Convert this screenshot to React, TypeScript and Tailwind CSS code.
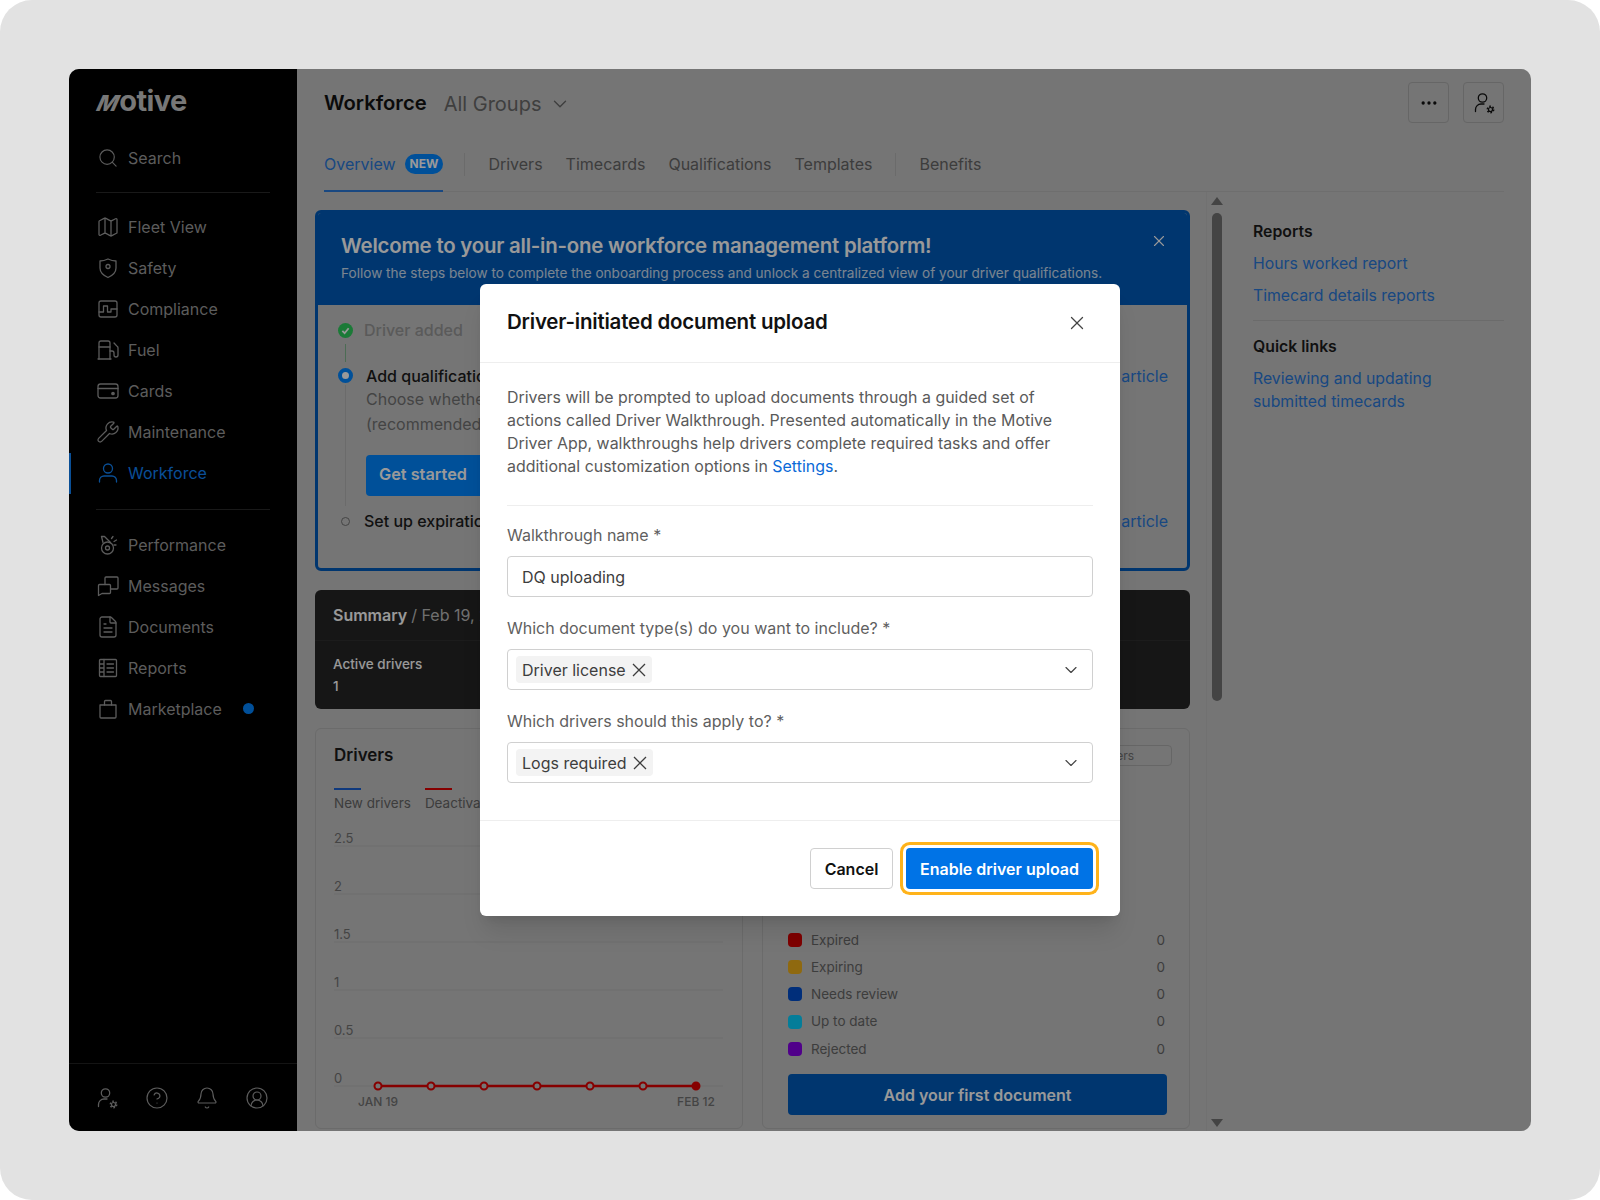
import type { ReactNode } from "react";
import {
  BellIcon,
  ChevronDown,
  CircleHelp,
  CircleUserRound,
  Ellipsis,
  FileText,
  Fuel,
  Map as MapIcon,
  Search,
  Wrench,
  X,
} from "lucide-react";

function Glyph({ children, size = 24 }: { children: ReactNode; size?: number }) {
  return (
    <svg width={size} height={size} viewBox="0 0 24 24" fill="none" stroke="currentColor" strokeWidth="1.3" strokeLinecap="round" strokeLinejoin="round">
      {children}
    </svg>
  );
}

function UserGear({ size = 24 }: { size?: number }) {
  return (
    <Glyph size={size}>
      <circle cx="10.500" cy="7" r="4.200" />
      <path d="M3.500 20.500v-2A5.500 5.500 0 0 1 9 13h3" />
      <circle cx="18.500" cy="18.500" r="2" strokeWidth="1.200" />
      <circle cx="18.500" cy="18.500" r="3.200" strokeWidth="1.500" strokeDasharray="1.700 1.650" strokeLinecap="butt" />
    </Glyph>
  );
}

const topNav: { label: string; icon: ReactNode; active?: boolean }[] = [
  { label: "Fleet View", icon: <MapIcon size={24} strokeWidth={1.3} /> },
  {
    label: "Safety",
    icon: (
      <Glyph>
        <path d="M4 5c3 0 5.500-.8 8-2 2.500 1.200 5 2 8 2v7c0 4.500-3.500 7.500-8 9.500C7.500 19.500 4 16.500 4 12z" />
        <circle cx="12" cy="10.500" r="2" />
      </Glyph>
    ),
  },
  {
    label: "Compliance",
    icon: (
      <Glyph>
        <rect x="3" y="4" width="18" height="16" rx="2" />
        <path d="M3 15h4.500v-6h4v6h3.500v-3H21" />
      </Glyph>
    ),
  },
  { label: "Fuel", icon: <Fuel size={24} strokeWidth={1.3} /> },
  {
    label: "Cards",
    icon: (
      <Glyph>
        <rect x="2" y="5" width="20" height="14" rx="2.500" />
        <path d="M2 9.500h20" />
        <circle cx="17" cy="14.500" r="1.200" fill="currentColor" />
      </Glyph>
    ),
  },
  { label: "Maintenance", icon: <Wrench size={24} strokeWidth={1.3} /> },
  {
    label: "Workforce",
    active: true,
    icon: (
      <Glyph>
        <circle cx="12" cy="7.500" r="4.500" />
        <path d="M3.500 21v-1.500A4.500 4.500 0 0 1 8 15h8a4.500 4.500 0 0 1 4.500 4.500V21" />
      </Glyph>
    ),
  },
];

const lowerNav: { label: string; icon: ReactNode; dot?: boolean }[] = [
  {
    label: "Performance",
    icon: (
      <Glyph>
        <circle cx="11.500" cy="15" r="6" />
        <circle cx="11.500" cy="15" r="2" />
        <path d="M7 9.500 5.500 3.500 M5.500 3.500h3l6 6 M15.500 5.500l1.500-2 M18 8.500l2.500-1.500 M18 12h2" />
      </Glyph>
    ),
  },
  {
    label: "Messages",
    icon: (
      <Glyph>
        <path d="M2.500 11.500a1 1 0 0 1 1-1h10a1 1 0 0 1 1 1v7a1 1 0 0 1-1 1H6l-3.500 2z" />
        <path d="M9 10.500V4a1 1 0 0 1 1-1h11a1 1 0 0 1 1 1v10a1 1 0 0 1-1 1h-6.500" />
      </Glyph>
    ),
  },
  { label: "Documents", icon: <FileText size={24} strokeWidth={1.3} /> },
  {
    label: "Reports",
    icon: (
      <Glyph>
        <rect x="3.500" y="3.500" width="17" height="17" rx="1" />
        <path d="M8 3.500v17 M11 8h6.500 M11 12h6.500 M11 16h6.500 M3.500 8H8 M3.500 12H8 M3.500 16H8" />
      </Glyph>
    ),
  },
  {
    label: "Marketplace",
    dot: true,
    icon: (
      <Glyph>
        <path d="M4 8h16v12a1 1 0 0 1-1 1H5a1 1 0 0 1-1-1z" />
        <path d="M8.500 8V4.500a1 1 0 0 1 1-1h5a1 1 0 0 1 1 1V8" />
      </Glyph>
    ),
  },
];

function NavRow({ label, icon, active, dot }: { label: string; icon: ReactNode; active?: boolean; dot?: boolean }) {
  return (
    <div className={`flex h-[41px] items-center gap-2 border-l-2 pl-[25px] text-base ${active ? "border-[#1184fa] text-[#1184fa]" : "border-transparent text-[#999999]"}`}>
      {icon}
      <span>{label}</span>
      {dot && <span className="ml-[13px] h-[11px] w-[11px] rounded-full bg-[#0084ff]" />}
    </div>
  );
}

function Sidebar() {
  return (
    <aside className="flex h-full w-[228px] shrink-0 flex-col bg-black">
      <div className="ml-[29px] mt-[17px] flex h-[30px] items-baseline text-[29px] font-bold leading-[30px] tracking-[-0.02em] text-[#c6c6c6]">
        <span className="mr-[1px] inline-block -skew-x-[24deg] text-[22px] font-extrabold">M</span>otive
      </div>
      <div className="mt-[21px]">
        <NavRow label="Search" icon={<Search size={24} strokeWidth={1.3} className="scale-90" />} />
      </div>
      <div className="mx-[27px] mt-[14px] border-t border-[#2b2b2b]" />
      <div className="mt-[13.500px]">
        {topNav.map((item) => (
          <NavRow key={item.label} {...item} />
        ))}
      </div>
      <div className="mx-[27px] mt-[15.500px] border-t border-[#2b2b2b]" />
      <div className="mt-[14px]">
        {lowerNav.map((item) => (
          <NavRow key={item.label} {...item} />
        ))}
      </div>
      <div className="mt-auto flex h-[68px] items-center gap-[26px] border-t border-[#222222] pl-[26px] text-[#999999]">
        <UserGear />
        <CircleHelp size={24} strokeWidth={1.2} />
        <BellIcon size={24} strokeWidth={1.2} />
        <CircleUserRound size={24} strokeWidth={1.2} />
      </div>
    </aside>
  );
}

function Banner() {
  return (
    <section className="h-[361px] shrink-0 overflow-hidden rounded-md border-[3px] border-[#005ab9] bg-[#c3c3c3]">
      <div className="relative h-[92px] bg-[#005ab9] pl-[23px] pt-[19px] text-white">
        <h2 className="text-[20.400px] font-semibold leading-[28px] tracking-[-0.01em]">Welcome to your all-in-one workforce management platform!</h2>
        <p className="mt-[3px] whitespace-nowrap text-[13.600px] text-white/80">
          Follow the steps below to complete the onboarding process and unlock a centralized view of your driver qualifications.
        </p>
        <X size={18} strokeWidth={1.5} className="absolute right-[19px] top-[19px]" />
      </div>
      <div className="pl-[20px] pr-[19px] pt-[13px]">
        <div className="flex h-[24px] items-center gap-[11px] text-base font-medium text-[#969696]">
          <span className="flex h-[15px] w-[15px] items-center justify-center rounded-full bg-[#2dcc5c] text-white">
            <svg width="9" height="9" viewBox="0 0 10 10" fill="none" stroke="currentColor" strokeWidth="2">
              <path d="M1.500 5.500 4 8l4.500-5.500" />
            </svg>
          </span>
          Driver added
        </div>
        <div className="ml-[7px] mt-[2px] h-[18px] w-px bg-[#7fb58d]" />
        <div className="mt-[2px] flex">
          <div className="flex w-[15px] flex-col items-center pt-[4px]">
            <span className="h-[15px] w-[15px] shrink-0 rounded-full border-[4px] border-[#0085ff] bg-white" />
            <span className="mt-[2px] w-px flex-1 bg-[#b2b2b2]" />
          </div>
          <div className="ml-[13px] flex-1 pb-[10px]">
            <div className="flex justify-between text-base leading-[24px]">
              <span className="font-medium text-[#1c1c1c]">Add qualifications</span>
              <span className="text-[#2a78d8]">Read article</span>
            </div>
            <p className="-mt-px whitespace-nowrap text-base leading-[24.500px] text-[#727272]">
              Choose whether drivers upload documents
              <br />
              (recommended) or add them yourself
            </p>
            <div className="mt-[19px] flex h-[41px] w-[130px] items-center rounded bg-[#0085ff] pb-[2px] pl-[13px] text-[16.300px] font-semibold text-white">Get started</div>
          </div>
        </div>
        <div className="mt-[3px] flex h-[24px] items-center text-base">
          <span className="ml-[3px] h-[9px] w-[9px] rounded-full border border-[#727272]" />
          <span className="ml-[14px] font-medium text-[#1c1c1c]">Set up expiration alerts</span>
          <span className="ml-auto text-[#2a78d8]">Read article</span>
        </div>
      </div>
    </section>
  );
}

function DriversChart() {
  const ticks = ["2.5", "2", "1.5", "1", "0.5", "0"];
  const points = [44, 97, 150, 203, 256, 309, 362];
  return (
    <svg width="395" height="290" viewBox="0 0 395 290" className="mt-[15px] block text-[#727272]">
      {ticks.map((tick, i) => (
        <g key={tick}>
          <line x1="0" x2="389" y1={18 + i * 48} y2={18 + i * 48} stroke="#b6b6b6" />
          <text x="0" y={15 + i * 48} fontSize="13" fill="currentColor">
            {tick}
          </text>
        </g>
      ))}
      <line x1="44" x2="362" y1="258" y2="258" stroke="#e00000" strokeWidth="2.500" />
      {points.map((x, i) => (
        <circle key={x} cx={x} cy="258" r="3.500" fill={i === 6 ? "#e00000" : "#c3c3c3"} stroke="#e00000" strokeWidth="2" />
      ))}
      <text x="44" y="278" fontSize="12" fontWeight="500" textAnchor="middle" fill="currentColor">
        JAN 19
      </text>
      <text x="362" y="278" fontSize="12" fontWeight="500" textAnchor="middle" fill="currentColor">
        FEB 12
      </text>
    </svg>
  );
}

const documentRows = [
  { label: "Expired", color: "bg-[#d20000]" },
  { label: "Expiring", color: "bg-[#eeb01a]" },
  { label: "Needs review", color: "bg-[#004ecb]" },
  { label: "Up to date", color: "bg-[#08d0ff]" },
  { label: "Rejected", color: "bg-[#8600e6]" },
];

function Cards() {
  return (
    <div className="mt-[19px] flex shrink-0 gap-[19px]">
      <section className="h-[401px] w-[428px] overflow-hidden rounded-md border border-[#b2b2b2] px-[18px] pt-[13px]">
        <h3 className="text-[17px] font-semibold leading-[26px] text-[#1c1c1c]">Drivers</h3>
        <div className="mt-[18px] flex gap-[14px] text-[13.500px] text-[#666666]">
          <div>
            <div className="mt-[2px] h-[2px] w-[27px] bg-[#1a5fd0]" />
            <div className="mt-[3px]">New drivers</div>
          </div>
          <div>
            <div className="mt-[2px] h-[2px] w-[27px] bg-[#e00000]" />
            <div className="mt-[3px]">Deactivated</div>
          </div>
        </div>
        <DriversChart />
      </section>
      <section className="h-[401px] w-[428px] overflow-hidden rounded-md border border-[#b2b2b2] pl-[25px] pr-[22px] pt-[16px]">
        <div className="-mr-[5px] ml-auto flex h-[21px] w-[160px] items-center justify-end rounded-sm border border-[#aaaaaa] pr-[37px] text-xs text-[#727272]">All drivers</div>
        <div className="mt-[160px]">
          {documentRows.map((row) => (
            <div key={row.label} className="flex h-[27.300px] items-center gap-[9px] pr-[2px] text-[13.500px] text-[#666666]">
              <span className={`h-[14px] w-[14px] rounded-sm ${row.color}`} />
              <span>{row.label}</span>
              <span className="ml-auto">0</span>
            </div>
          ))}
        </div>
        <div className="mt-[12px] flex h-[41px] items-center justify-center rounded bg-[#005ab9] text-base font-semibold text-white">Add your first document</div>
      </section>
    </div>
  );
}

function Scrollbar() {
  return (
    <div className="ml-[16px] flex w-[20px] shrink-0 flex-col items-center justify-between border-l border-[#bcbcbc] pb-[4px] pt-[5px]">
      <div className="flex flex-col items-center">
        <div className="h-0 w-0 border-x-[6px] border-b-[8px] border-x-transparent border-b-[#727272]" />
        <div className="mt-[8px] h-[488px] w-[10px] rounded-full bg-[#727272]" />
      </div>
      <div className="h-0 w-0 border-x-[6px] border-t-[8px] border-x-transparent border-t-[#727272]" />
    </div>
  );
}

function Workspace() {
  return (
    <main className="flex h-full min-w-0 flex-1 flex-col bg-[#c3c3c3] px-[27px] pt-[13px]">
      <header className="flex h-[41px] shrink-0 items-center">
        <h1 className="pt-[2px] text-[20.200px] font-semibold text-[#111111]">Workforce</h1>
        <span className="ml-[17px] pt-[2px] text-xl text-[#696969]">All Groups</span>
        <ChevronDown size={22} strokeWidth={1.5} className="ml-[8px] mt-[2px] text-[#696969]" />
        <button className="ml-auto flex h-[41px] w-[41px] items-center justify-center rounded border border-[#aaaaaa] text-[#111111]">
          <Ellipsis size={20} />
        </button>
        <button className="ml-[14px] flex h-[41px] w-[41px] items-center justify-center rounded border border-[#aaaaaa] text-[#111111]">
          <UserGear />
        </button>
      </header>
      <nav className="flex h-[69px] shrink-0 items-center gap-[23px] border-b border-[#b8b8b8] pt-[14px] text-base text-[#666666]">
        <div className="-mb-px -mr-[2px] flex items-center gap-[9px] self-stretch border-b-[2px] border-[#2a78d8] text-[#2a78d8]">
          Overview
          <span className="rounded-full bg-[#0085ff] px-[5px] text-[12px] font-bold leading-[20px] text-white">NEW</span>
        </div>
        <span className="h-[23px] w-px bg-[#b2b2b2]" />
        <span>Drivers</span>
        <span>Timecards</span>
        <span>Qualifications</span>
        <span>Templates</span>
        <span className="h-[23px] w-px bg-[#b2b2b2]" />
        <span>Benefits</span>
      </nav>
      <div className="-ml-[9px] flex min-h-0 flex-1">
        <div className="flex w-[875px] shrink-0 flex-col overflow-hidden pt-[18px]">
          <Banner />
          <section className="mt-[19px] h-[119px] shrink-0 rounded-md bg-[#252525] text-white">
            <div className="flex h-[51px] items-center border-b border-[#303030] pl-[18px] text-base">
              <span className="font-semibold">Summary</span>
              <span className="ml-[4px] text-white/70">/ Feb 19, 2024</span>
            </div>
            <div className="pl-[18px] pt-[12px] text-[13.500px] font-medium leading-[22px]">
              <div>Active drivers</div>
              <div>1</div>
            </div>
          </section>
          <Cards />
        </div>
        <Scrollbar />
        <aside className="ml-[27px] flex-1 pt-[28px] text-[15.800px] leading-[23px]">
          <h3 className="font-semibold text-[#1c1c1c]">Reports</h3>
          <a className="mt-[9px] block text-[#2a78d8]">Hours worked report</a>
          <a className="mt-[9px] block text-[#2a78d8]">Timecard details reports</a>
          <div className="mt-[13px] border-t border-[#b2b2b2]" />
          <h3 className="mt-[14px] font-semibold text-[#1c1c1c]">Quick links</h3>
          <a className="mt-[9px] block text-[#2a78d8]">
            Reviewing and updating
            <br />
            submitted timecards
          </a>
        </aside>
      </div>
    </main>
  );
}

function Chip({ label }: { label: string }) {
  return (
    <span className="flex h-[27px] items-center gap-[5px] rounded-sm bg-[#f3f3f3] pl-[6px] pr-[5px] text-[#3d3d3d]">
      {label}
      <svg width="16" height="16" viewBox="0 0 16 16" fill="none" stroke="currentColor" strokeWidth="1.300">
        <path d="M2 2l12 12M14 2 2 14" />
      </svg>
    </span>
  );
}

function Field({ label, children }: { label: string; children: ReactNode }) {
  return (
    <div className="mt-[19px]">
      <label className="block leading-[24px] text-[#5f5f5f]">{label}</label>
      <div className="mt-[9px] flex h-[41px] items-center rounded border border-[#d0d0d0] bg-white pl-[8px] pr-[11px]">{children}</div>
    </div>
  );
}

function UploadDialog() {
  return (
    <div className="absolute left-[411px] top-[215px] w-[640px] rounded-md bg-white text-base shadow-xl">
      <div className="flex h-[79px] items-start justify-between border-b border-[#eeeeee] px-[27px] pt-[23.500px]">
        <h2 className="text-[20.500px] font-semibold leading-[28px] tracking-[-0.01em] text-[#111111]">Driver-initiated document upload</h2>
        <X size={22} strokeWidth={1.4} className="mr-[5px] mt-[4px] text-[#444444]" />
      </div>
      <div className="px-[27px] pt-[23px]">
        <p className="max-w-[570px] text-[15.950px] leading-[23px] text-[#5a5a5a]">
          Drivers will be prompted to upload documents through a guided set of actions called Driver Walkthrough. Presented automatically in the Motive Driver App, walkthroughs help drivers complete required tasks and offer additional customization options in <a className="text-[#0a6ad8]">Settings</a>.
        </p>
        <div className="mt-[27px] border-t border-[#eeeeee]" />
        <div className="-mt-[2px]">
          <Field label="Walkthrough name *">
            <span className="pl-[6px] text-[#3d3d3d]">DQ uploading</span>
          </Field>
          <Field label="Which document type(s) do you want to include? *">
            <Chip label="Driver license" />
            <ChevronDown size={20} strokeWidth={1.4} className="ml-auto text-[#444444]" />
          </Field>
          <Field label="Which drivers should this apply to? *">
            <Chip label="Logs required" />
            <ChevronDown size={20} strokeWidth={1.4} className="ml-auto text-[#444444]" />
          </Field>
        </div>
      </div>
      <div className="mt-[37px] flex h-[96px] justify-end gap-[13px] border-t border-[#eeeeee] pr-[27px] pt-[27px]">
        <button className="h-[41px] w-[83px] rounded border border-[#d0d0d0] font-semibold text-[#111111]">Cancel</button>
        <button className="h-[41px] w-[187px] rounded bg-[#0073e6] font-semibold text-white shadow-[0_0_0_3px_#ffffff,0_0_0_6px_#ffb31a]">Enable driver upload</button>
      </div>
    </div>
  );
}

export default function App() {
  return (
    <div className="bg-white font-[Inter,sans-serif]">
      <div className="h-[1200px] w-[1600px] rounded-[32px] bg-[#e2e2e2] p-[69px]">
        <div className="relative flex h-[1062px] w-[1462px] overflow-hidden rounded-[10px]">
          <Sidebar />
          <Workspace />
          <div className="absolute inset-0 bg-black/40" />
          <UploadDialog />
        </div>
      </div>
    </div>
  );
}
